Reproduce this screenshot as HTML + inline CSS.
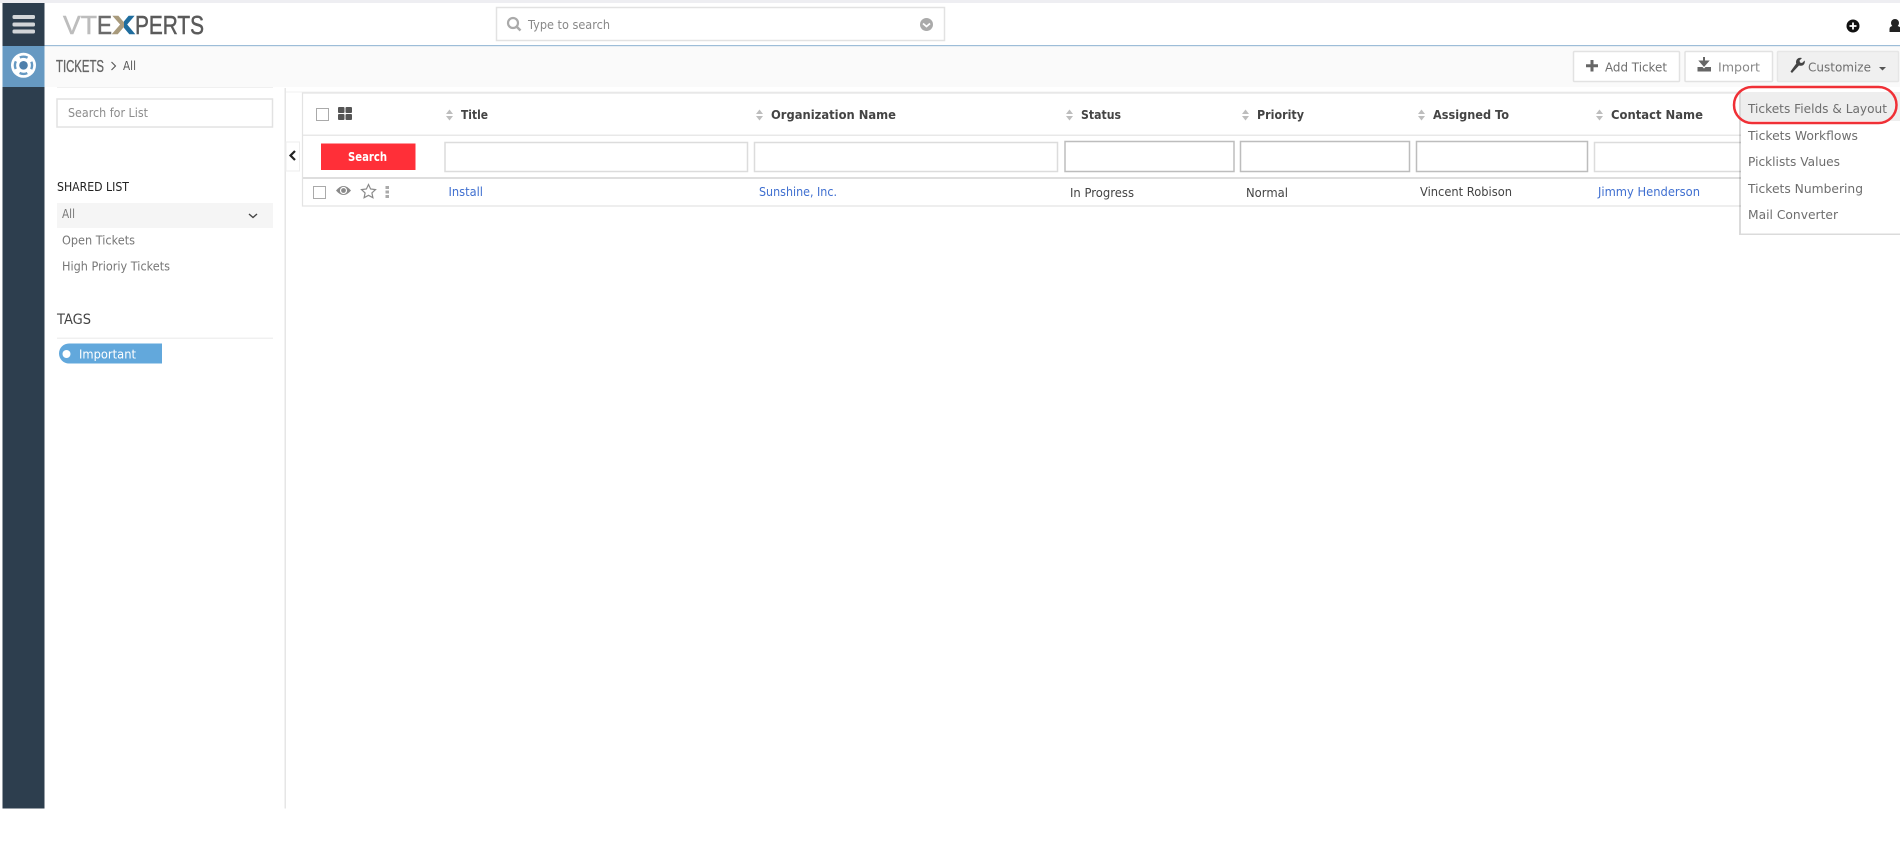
<!DOCTYPE html>
<html lang="en">
<head>
<meta charset="utf-8">
<title>Tickets</title>
<style>
html,body{margin:0;padding:0;background:#fff;width:1900px;height:850px;overflow:hidden}
svg{display:block;filter:blur(.35px)}
text{font-family:"DejaVu Sans","Liberation Sans",sans-serif;font-size:12.5px;fill:#666}
.b{font-weight:700;fill:#444}
.l{fill:#3f6fd0}
.m{fill:#6e6e6e}
.d{fill:#444}
.logo{font-family:"Liberation Sans",sans-serif;font-size:26px;stroke-width:.5}
.box{fill:#fff;stroke:#e2e2e2;stroke-width:1.5}
.inp{fill:#fff;stroke:#dcdcdc;stroke-width:1.5}
.inp2{fill:#fff;stroke:#bdbdbd;stroke-width:1.5}
.s{fill:#bdbdbd}
</style>
</head>
<body>
<svg width="1900" height="850" viewBox="0 0 1900 850" xmlns="http://www.w3.org/2000/svg">
<defs>
<linearGradient id="xg" x1="0" x2="1" y1="0" y2="0"><stop offset=".5" stop-color="#a89a7c"/><stop offset=".5" stop-color="#1f6d9e"/></linearGradient>
</defs>
<rect width="1900" height="850" fill="#fff"/>
<rect width="1900" height="3" fill="#eeeef2"/>

<!-- top bar / sub bar -->
<rect x="44" y="46" width="1856" height="41" fill="#fafafa"/>
<rect x="44" y="45" width="1856" height="1.2" fill="#9dbdd8"/>
<rect x="57" y="87" width="216" height="1" fill="#f0f0f0"/>
<rect x="286" y="91.500" width="1614" height="1" fill="#f0f0f0"/>

<!-- side rail -->
<rect x="2.500" y="3" width="42" height="805.500" fill="#2d3e4e"/>
<rect x="2.500" y="46" width="42" height="41" fill="#6699c2"/>
<rect x="12.500" y="15" width="22.500" height="4" rx="1.500" fill="#d2d5d8"/>
<rect x="12.500" y="22.500" width="22.500" height="4" rx="1.500" fill="#d2d5d8"/>
<rect x="12.500" y="29.500" width="22.500" height="4" rx="1.500" fill="#d2d5d8"/>
<circle cx="23.500" cy="65.300" r="12.500" fill="#fff"/>
<circle cx="23.500" cy="65.300" r="8.600" fill="none" stroke="#6699c2" stroke-width="2.400" stroke-dasharray="8 5.500" stroke-dashoffset="4"/>
<circle cx="23.500" cy="65.300" r="4.300" fill="#4f80ac"/>

<!-- logo -->
<text x="63" y="34" class="logo" style="fill:#bdbdbd;stroke:#bdbdbd" textLength="34" lengthAdjust="spacingAndGlyphs">VT</text>
<text x="97" y="34" class="logo" style="fill:#6a6a6a;stroke:#6a6a6a" textLength="15" lengthAdjust="spacingAndGlyphs">E</text>
<text x="112" y="34" class="logo" style="font-weight:700;fill:url(#xg);stroke:url(#xg)" textLength="23" lengthAdjust="spacingAndGlyphs">X</text>
<text x="135" y="34" class="logo" style="fill:#5a5a5a;stroke:#5a5a5a" textLength="69" lengthAdjust="spacingAndGlyphs">PERTS</text>

<!-- global search -->
<rect x="496.500" y="7.500" width="448" height="33" class="box"/>
<circle cx="513" cy="23" r="5" fill="none" stroke="#aaa" stroke-width="2.200"/>
<path d="M516.500 26.500l4 4" stroke="#aaa" stroke-width="2.500"/>
<text x="528" y="29" style="fill:#888" textLength="82" lengthAdjust="spacingAndGlyphs">Type to search</text>
<circle cx="926.500" cy="24.500" r="6.500" fill="#aaa"/>
<path d="M923 23.500l3.500 3 3.500-3" fill="none" stroke="#fff" stroke-width="1.800"/>

<!-- top right -->
<circle cx="1853" cy="26" r="6.500" fill="#111"/>
<path d="M1853 22.500v7M1849.500 26h7" stroke="#fff" stroke-width="1.800"/>
<circle cx="1895" cy="23" r="4" fill="#222"/>
<path d="M1889.500 32v-3q0-2.500 3-3h5q3 .5 3 3v3z" fill="#222"/>

<!-- breadcrumb -->
<text x="56" y="72" style="font-family:'Liberation Sans',sans-serif;font-size:17.500px;fill:#666;stroke:#666;stroke-width:.35" textLength="48" lengthAdjust="spacingAndGlyphs">TICKETS</text>
<path d="M111.500 62l4 4-4 4" fill="none" stroke="#555" stroke-width="1.100"/>
<text x="123" y="70" style="font-size:12px;fill:#555" textLength="13" lengthAdjust="spacingAndGlyphs">All</text>

<!-- action buttons -->
<rect x="1573.500" y="51.500" width="106" height="30" rx="1" class="box"/>
<path d="M1592 60v11.500M1586 65.700h12" stroke="#666" stroke-width="3"/>
<text x="1605" y="71.500" class="m" textLength="62" lengthAdjust="spacingAndGlyphs">Add Ticket</text>
<rect x="1685" y="51.500" width="87.500" height="30" rx="1" class="box"/>
<path d="M1704 57v5M1700.500 61.500l3.500 4 3.500-4z" stroke="#666" stroke-width="2" fill="#666"/>
<path d="M1697.500 67h5l1.500 1.500 1.500-1.500h5.500v4.500h-13.500z" fill="#666"/>
<text x="1718" y="71.500" style="fill:#888" textLength="42" lengthAdjust="spacingAndGlyphs">Import</text>
<rect x="1777.500" y="51.500" width="121" height="30" rx="1" fill="#f0f0f0" stroke="#e6e6e6" stroke-width="1.500"/>
<path d="M1790.500 71.500l1.500 1.500 7-7.500q4 1 5.500-2 .6-1.500.2-3l-2.700 2.500-2-.5-.5-2 2.500-2.500q-3-.7-4.800 1-1.800 2-.9 4.500z" fill="#444"/>
<text x="1808" y="71.500" class="m" textLength="63" lengthAdjust="spacingAndGlyphs">Customize</text>
<path d="M1879 67h7l-3.500 3.500z" fill="#555"/>

<!-- left panel -->
<rect x="57" y="99" width="215.500" height="28" class="box"/>
<text x="68" y="117" style="fill:#8c8c8c" textLength="80" lengthAdjust="spacingAndGlyphs">Search for List</text>
<text x="57" y="191" style="fill:#222" textLength="72" lengthAdjust="spacingAndGlyphs">SHARED LIST</text>
<rect x="57" y="203" width="216" height="25" fill="#f5f5f5"/>
<text x="62" y="218" style="fill:#777" textLength="13" lengthAdjust="spacingAndGlyphs">All</text>
<path d="M249 214l4 3.500 4-3.500" fill="none" stroke="#444" stroke-width="1.400"/>
<text x="62" y="244.500" style="fill:#777" textLength="73" lengthAdjust="spacingAndGlyphs">Open Tickets</text>
<text x="62" y="270.500" style="fill:#777" textLength="108" lengthAdjust="spacingAndGlyphs">High Prioriy Tickets</text>
<text x="57" y="324" style="font-size:14px;fill:#444" textLength="34" lengthAdjust="spacingAndGlyphs">TAGS</text>
<rect x="57" y="337.500" width="216" height="1.500" fill="#f0f0f0"/>
<path d="M162 343.500h-93a10 10 0 0 0 0 20h93z" fill="#62a8dc"/>
<circle cx="66.500" cy="354" r="4" fill="#fff"/>
<text x="79" y="358.500" style="fill:#fff" textLength="57" lengthAdjust="spacingAndGlyphs">Important</text>

<!-- divider and collapse -->
<rect x="284.500" y="88" width="1.500" height="720.500" fill="#e6e6e6"/>
<rect x="286" y="142" width="13.500" height="29" fill="#fff" stroke="#eee"/>
<path d="M295 151l-4.500 4.500 4.500 4.500" fill="none" stroke="#222" stroke-width="2.200"/>

<!-- table -->
<rect x="302.500" y="93" width="1597.500" height="113" fill="#fff" stroke="#e3e3e3" stroke-width="1.200"/>
<rect x="303" y="134.500" width="1597" height="1.500" fill="#e8e8e8"/>
<rect x="303" y="177" width="1597" height="2" fill="#dedede"/>

<!-- header -->
<rect x="316.500" y="108.500" width="12" height="12" fill="#fff" stroke="#aaa"/>
<g fill="#555"><rect x="338" y="107" width="6.500" height="6" rx="1"/><rect x="345.500" y="107" width="6.500" height="6" rx="1"/><rect x="338" y="114" width="6.500" height="6" rx="1"/><rect x="345.500" y="114" width="6.500" height="6" rx="1"/></g>
<g class="s">
<path d="M446 114l3.500-4.500 3.500 4.500zM446 116l3.500 4.500 3.500-4.500z"/>
<path d="M756 114l3.500-4.500 3.500 4.500zM756 116l3.500 4.500 3.500-4.500z"/>
<path d="M1066 114l3.500-4.500 3.500 4.500zM1066 116l3.500 4.500 3.500-4.500z"/>
<path d="M1242 114l3.500-4.500 3.500 4.500zM1242 116l3.500 4.500 3.500-4.500z"/>
<path d="M1418 114l3.500-4.500 3.500 4.500zM1418 116l3.500 4.500 3.500-4.500z"/>
<path d="M1596 114l3.500-4.500 3.500 4.500zM1596 116l3.500 4.500 3.500-4.500z"/>
</g>
<text x="461" y="119" class="b" textLength="27" lengthAdjust="spacingAndGlyphs">Title</text>
<text x="771" y="119" class="b" textLength="125" lengthAdjust="spacingAndGlyphs">Organization Name</text>
<text x="1081" y="119" class="b" textLength="40" lengthAdjust="spacingAndGlyphs">Status</text>
<text x="1257" y="119" class="b" textLength="47" lengthAdjust="spacingAndGlyphs">Priority</text>
<text x="1433" y="119" class="b" textLength="76" lengthAdjust="spacingAndGlyphs">Assigned To</text>
<text x="1611" y="119" class="b" textLength="92" lengthAdjust="spacingAndGlyphs">Contact Name</text>

<!-- filter row -->
<rect x="321" y="143.500" width="94.500" height="26.500" fill="#ff2f38"/>
<text x="348" y="161" style="font-weight:700;font-size:12px;fill:#fff" textLength="39" lengthAdjust="spacingAndGlyphs">Search</text>
<rect x="445" y="142.500" width="302.500" height="29" class="inp"/>
<rect x="754.500" y="142.500" width="303" height="29" class="inp"/>
<rect x="1065" y="141.500" width="169" height="30" class="inp2"/>
<rect x="1240.500" y="141.500" width="169" height="30" class="inp2"/>
<rect x="1416.500" y="141.500" width="171" height="30" class="inp2"/>
<rect x="1594.500" y="142.500" width="300" height="29" class="inp"/>

<!-- data row -->
<rect x="313.500" y="186.500" width="12" height="12" fill="#fff" stroke="#aaa"/>
<path d="M336 190.500q7.500-9 15 0q-7.500 9-15 0z" fill="#8a8a8a"/>
<circle cx="343.500" cy="190.500" r="3.600" fill="#fff"/>
<circle cx="343.500" cy="190.500" r="2.400" fill="#8a8a8a"/>
<path d="M368.500 184.500l2.100 4.500 4.900.6-3.600 3.300 1 4.800-4.400-2.400-4.400 2.400 1-4.800-3.600-3.300 4.900-.6z" fill="#fff" stroke="#8a8a8a" stroke-width="1.200"/>
<g fill="#aaa"><rect x="385.500" y="186" width="3.500" height="3"/><rect x="385.500" y="190.500" width="3.500" height="3"/><rect x="385.500" y="195" width="3.500" height="3"/></g>
<text x="448.500" y="196" class="l" textLength="34.500" lengthAdjust="spacingAndGlyphs">Install</text>
<text x="759" y="196" class="l" textLength="78" lengthAdjust="spacingAndGlyphs">Sunshine, Inc.</text>
<text x="1070" y="197" class="d" textLength="64" lengthAdjust="spacingAndGlyphs">In Progress</text>
<text x="1246" y="197" class="d" textLength="42" lengthAdjust="spacingAndGlyphs">Normal</text>
<text x="1420" y="196" class="d" textLength="92" lengthAdjust="spacingAndGlyphs">Vincent Robison</text>
<text x="1598" y="196" class="l" textLength="102" lengthAdjust="spacingAndGlyphs">Jimmy Henderson</text>

<!-- dropdown -->
<rect x="1739" y="90" width="163" height="145" fill="#000" opacity=".14"/>
<rect x="1741" y="90" width="159" height="143.500" fill="#fff"/>
<rect x="1741" y="92" width="159" height="29" fill="#eeeeee"/>
<text x="1748" y="113" class="m" textLength="139" lengthAdjust="spacingAndGlyphs">Tickets Fields &amp; Layout</text>
<text x="1748" y="140" class="m" textLength="110" lengthAdjust="spacingAndGlyphs">Tickets Workflows</text>
<text x="1748" y="166" class="m" textLength="92" lengthAdjust="spacingAndGlyphs">Picklists Values</text>
<text x="1748" y="193" class="m" textLength="115" lengthAdjust="spacingAndGlyphs">Tickets Numbering</text>
<text x="1748" y="219" class="m" textLength="90" lengthAdjust="spacingAndGlyphs">Mail Converter</text>
<rect x="1734" y="87" width="162.500" height="36" rx="18" fill="none" stroke="#f03036" stroke-width="2.500"/>
</svg>
</body>
</html>
